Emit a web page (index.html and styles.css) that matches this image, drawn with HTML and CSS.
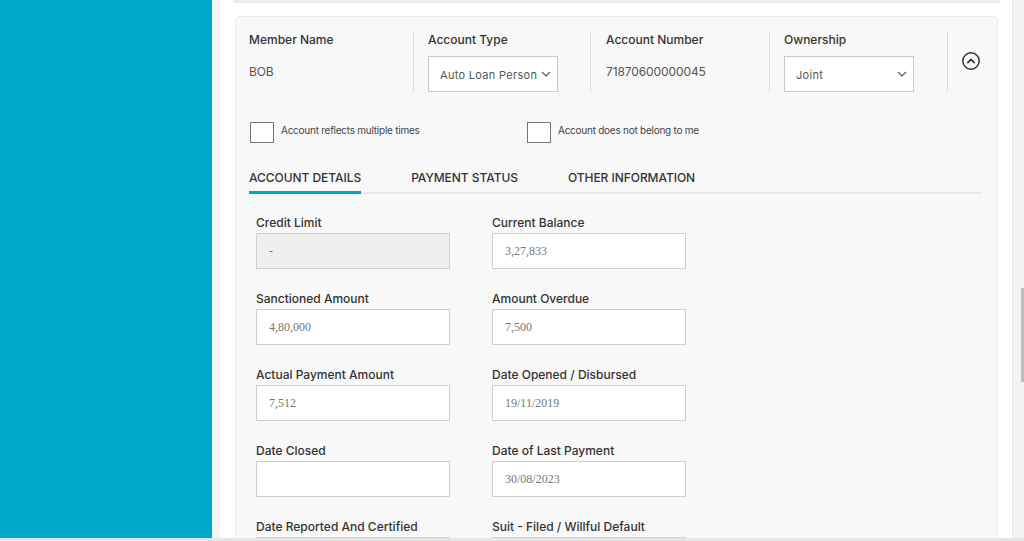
FILE: index.html
```html
<!DOCTYPE html>
<html>
<head>
<meta charset="utf-8">
<link rel="stylesheet" href="styles.css">
</head>
<body>
<div class="app">
  <aside class="sidebar"></aside>
  <main class="main">
    <div class="prev-card"></div>
    <section class="card">
      <div class="summary">
        <div class="col col-1">
          <div class="label">Member Name</div>
          <div class="value">BOB</div>
        </div>
        <div class="col col-2">
          <div class="label">Account Type</div>
          <div class="select sel-type">
            <span class="select-text">Auto Loan Personal</span>
            <svg class="caret" width="10" height="6" viewBox="0 0 10 6"><path d="M1 1l4 4 4-4" fill="none" stroke="#555" stroke-width="1.1"/></svg>
          </div>
        </div>
        <div class="col col-3">
          <div class="label">Account Number</div>
          <div class="value">71870600000045</div>
        </div>
        <div class="col col-4">
          <div class="label">Ownership</div>
          <div class="select sel-own">
            <span class="select-text">Joint</span>
            <svg class="caret" width="10" height="6" viewBox="0 0 10 6"><path d="M1 1l4 4 4-4" fill="none" stroke="#555" stroke-width="1.1"/></svg>
          </div>
        </div>
        <div class="col col-5">
          <svg class="collapse" width="20" height="20" viewBox="0 0 20 20"><circle cx="10" cy="10" r="8.2" fill="none" stroke="#333" stroke-width="1.5"/><path d="M6.8 11.6L10 8.4l3.2 3.2" fill="none" stroke="#333" stroke-width="1.6" stroke-linecap="round" stroke-linejoin="round"/></svg>
        </div>
      </div>

      <div class="checks">
        <label class="check check-1"><span class="box"></span><span class="check-text">Account reflects multiple times</span></label>
        <label class="check"><span class="box"></span><span class="check-text">Account does not belong to me</span></label>
      </div>

      <nav class="tabs">
        <span class="tab active">ACCOUNT DETAILS</span>
        <span class="tab">PAYMENT STATUS</span>
        <span class="tab">OTHER INFORMATION</span>
      </nav>

      <div class="fields">
        <div class="field"><div class="flabel">Credit Limit</div><div class="input disabled">-</div></div>
        <div class="field"><div class="flabel">Current Balance</div><div class="input">3,27,833</div></div>
        <div class="field"><div class="flabel">Sanctioned Amount</div><div class="input">4,80,000</div></div>
        <div class="field"><div class="flabel">Amount Overdue</div><div class="input">7,500</div></div>
        <div class="field"><div class="flabel">Actual Payment Amount</div><div class="input">7,512</div></div>
        <div class="field"><div class="flabel">Date Opened / Disbursed</div><div class="input">19/11/2019</div></div>
        <div class="field"><div class="flabel">Date Closed</div><div class="input"></div></div>
        <div class="field"><div class="flabel">Date of Last Payment</div><div class="input">30/08/2023</div></div>
        <div class="field"><div class="flabel">Date Reported And Certified</div><div class="input disabled"></div></div>
        <div class="field"><div class="flabel">Suit - Filed / Willful Default</div><div class="input disabled light"></div></div>
      </div>
    </section>
  </main>
  <div class="scrollbar"><div class="thumb"></div></div>
</div>
<div class="bottom-edge"></div>
</body>
</html>
```

FILE: styles.css
```css
* { box-sizing: border-box; }
html, body { margin: 0; padding: 0; height: 541px; overflow: hidden; }
body { font-family: Inter, "Noto Sans", sans-serif; color: #333; background: #fff; }

.app { display: flex; height: 541px; }
.sidebar { width: 212px; flex: none; background: #00a7c9; }

.main {
  flex: 1;
  background: #fff;
  border-left: 8px solid #f4f5f6;
  padding-left: 15px;
  padding-right: 14px;
  overflow: hidden;
}
.prev-card { height: 3px; background: #ececec; margin-left: -2px; margin-right: -2px; }
.card {
  margin-top: 13px;
  background: #f8f8f8;
  border: 1px solid #ececec;
  border-radius: 5px 5px 0 0;
  padding-right: 15px;
  min-height: 600px;
}

.summary { display: flex; padding-top: 15px; padding-bottom: 15px; }
.col { height: 60px; border-right: 1px solid #dcdcdc; }
.col-1 { width: 178px; padding-left: 13px; }
.col-2 { width: 177px; padding-left: 14px; }
.col-3 { width: 179px; padding-left: 15px; }
.col-4 { width: 178px; padding-left: 14px; }
.col-5 { border-right: none; padding-left: 13px; padding-top: 19px; }
.collapse { display: block; }

.label { font-size: 12px; font-weight: 500; line-height: 16px; color: #333; }
.value { font-size: 12px; line-height: 16px; color: #555; margin-top: 16px; letter-spacing: -0.1px; }
.select {
  margin-top: 8px;
  height: 36px;
  background: #fff;
  border: 1px solid #c8c8c8;
  display: flex;
  align-items: center;
  padding-left: 11px;
  padding-right: 6px;
  padding-top: 2px;
}
.sel-type { width: 130px; }
.sel-own { width: 130px; }
.select-text { flex: 1; font-size: 11px; color: #555; white-space: nowrap; overflow: hidden; text-overflow: clip; letter-spacing: 0.3px; }
.caret { flex: none; margin-left: 4px; margin-top: -3px; }

.checks { display: flex; padding-left: 14px; margin-top: 15px; }
.check { display: flex; align-items: flex-start; }
.check-1 { width: 277px; }
.box { width: 24px; height: 21px; background: #fff; border: 1px solid #777; flex: none; }
.check-text { font-size: 10px; line-height: 14px; color: #444; margin-left: 7px; margin-top: 1px; letter-spacing: -0.25px; }

.tabs {
  display: flex;
  gap: 50px;
  margin-left: 13px;
  margin-top: 27px;
  border-bottom: 2px solid #e9e9e9;
}
.tab {
  font-size: 12px;
  font-weight: 500;
  line-height: 16px;
  color: #333;
  padding-bottom: 5px;
  margin-bottom: -2px;
  border-bottom: 3px solid transparent;
  letter-spacing: -0.05px;
}
.tab.active { border-bottom-color: #00a7c9; }

.fields {
  display: grid;
  grid-template-columns: 194px 194px;
  column-gap: 42px;
  row-gap: 22px;
  padding-left: 20px;
  margin-top: 21px;
}
.flabel { font-size: 12px; font-weight: 500; line-height: 16px; color: #333; }
.input {
  margin-top: 2px;
  height: 36px;
  background: #fff;
  border: 1px solid #cfcfcf;
  font-family: "Liberation Serif", serif;
  font-size: 12px;
  color: #777;
  display: flex;
  align-items: center;
  padding-left: 12px;
}
.input.disabled { background: #efefef; }
.input.light { background: #f3f3f3; }

.scrollbar {
  width: 12px;
  flex: none;
  background: #f1f3f5;
  border-left: 1px solid #e6e6e6;
  position: relative;
}
.thumb { position: absolute; right: 0; top: 288px; width: 3px; height: 94px; background: #bdbdbd; }

.bottom-edge { position: fixed; left: 0; right: 0; bottom: 0; height: 3px; background: #e6e6e6; }
```
